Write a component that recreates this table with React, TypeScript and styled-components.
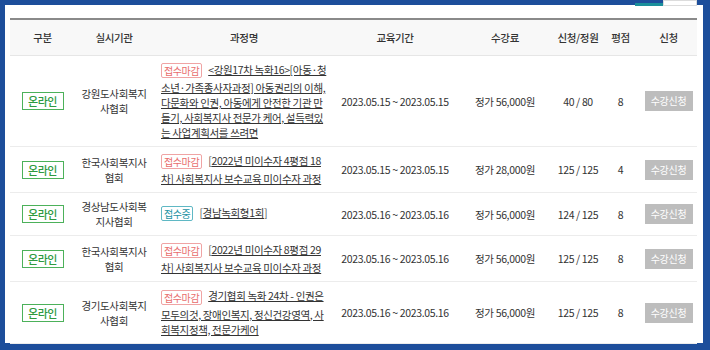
import styled, { createGlobalStyle } from 'styled-components';

const GlobalStyle = createGlobalStyle`
  html, body {
    margin: 0;
    padding: 0;
    background: #1d4e9b;
  }
  body {
    font-family: "Noto Sans CJK KR", "Noto Sans", sans-serif;
    color: #333;
  }
`;

type Course = {
  institute: string[];
  status: 'closed' | 'open';
  title: string;
  bracket?: boolean;
  period: string;
  price: string;
  count: string;
  score: string;
};

const courses: Course[] = [
  {
    institute: ['강원도사회복지', '사협회'],
    status: 'closed',
    title:
      '<강원17차 녹화16>[아동·청소년·가족종사자과정] 아동권리의 이해, 다문화와 인권, 아동에게 안전한 기관 만들기, 사회복지사 전문가 케어, 설득력있는 사업계획서를 쓰려면',
    period: '2023.05.15 ~ 2023.05.15',
    price: '정가 56,000원',
    count: '40 / 80',
    score: '8',
  },
  {
    institute: ['한국사회복지사', '협회'],
    status: 'closed',
    bracket: true,
    title: '2022년 미이수자 4평점 18차] 사회복지사 보수교육 미이수자 과정',
    period: '2023.05.15 ~ 2023.05.15',
    price: '정가 28,000원',
    count: '125 / 125',
    score: '4',
  },
  {
    institute: ['경상남도사회복', '지사협회'],
    status: 'open',
    bracket: true,
    title: '경남녹회형1회',
    period: '2023.05.16 ~ 2023.05.16',
    price: '정가 56,000원',
    count: '124 / 125',
    score: '8',
  },
  {
    institute: ['한국사회복지사', '협회'],
    status: 'closed',
    bracket: true,
    title: '2022년 미이수자 8평점 29차] 사회복지사 보수교육 미이수자 과정',
    period: '2023.05.16 ~ 2023.05.16',
    price: '정가 56,000원',
    count: '125 / 125',
    score: '8',
  },
  {
    institute: ['경기도사회복지', '사협회'],
    status: 'closed',
    title: '경기협회 녹화 24차 - 인권은 모두의것, 장애인복지, 정신건강영역, 사회복지정책, 전문가케어',
    period: '2023.05.16 ~ 2023.05.16',
    price: '정가 56,000원',
    count: '125 / 125',
    score: '8',
  },
];

const columns = [65, 78, 182, 120, 100, 46, 39, 57];
const headers = ['구분', '실시기관', '과정명', '교육기간', '수강료', '신청/정원', '평점', '신청'];

export default function App() {
  return (
    <>
      <GlobalStyle />
      <Frame>
        <Panel>
          <Tabs>
            <Tab active />
            <Tab />
          </Tabs>
          <Table>
            <colgroup>
              {columns.map((w, i) => (
                <col key={i} style={{ width: w }} />
              ))}
            </colgroup>
            <thead>
              <tr>
                {headers.map(h => (
                  <Th key={h}>{h}</Th>
                ))}
              </tr>
            </thead>
            <tbody>
              {courses.map((c, i) => (
                <tr key={i}>
                  <Td>
                    <OnlineBadge>온라인</OnlineBadge>
                  </Td>
                  <Td>
                    {c.institute.map(line => (
                      <Line key={line}>{line}</Line>
                    ))}
                  </Td>
                  <TitleTd>
                    <StatusBadge status={c.status}>
                      {c.status === 'open' ? '접수중' : '접수마감'}
                    </StatusBadge>
                    {c.bracket && <Bracket>[</Bracket>}
                    <TitleLink>{c.title}</TitleLink>
                    {c.status === 'open' && <Bracket>]</Bracket>}
                  </TitleTd>
                  <Td>{c.period}</Td>
                  <Td>{c.price}</Td>
                  <Td>{c.count}</Td>
                  <Td>{c.score}</Td>
                  <Td>
                    <ApplyButton>수강신청</ApplyButton>
                  </Td>
                </tr>
              ))}
            </tbody>
          </Table>
        </Panel>
      </Frame>
    </>
  );
}

const Frame = styled.div`
  width: 710px;
  height: 350px;
  padding: 5px 7px 7px 5px;
  box-sizing: border-box;
  background: #1d4e9b;
  overflow: hidden;
`;

const Panel = styled.div`
  position: relative;
  background: #fff;
  height: 100%;
  padding: 13px 6px 0 5px;
  box-sizing: border-box;
`;

const Tabs = styled.div`
  position: absolute;
  top: -5px;
  right: 6px;
  display: flex;
  height: 6px;
`;

const Tab = styled.div<{ active?: boolean }>`
  width: ${p => (p.active ? '28px' : '34px')};
  height: 6px;
  box-sizing: border-box;
  border: ${p => (p.active ? 'none' : '1px solid #dcdcdc')};
  border-bottom: ${p => (p.active ? '3px solid #1a8f9b' : '1px solid #dcdcdc')};
  background: ${p => (p.active ? '#1d4e9b' : '#fff')};
`;

const Table = styled.table`
  width: 687px;
  table-layout: fixed;
  border-collapse: collapse;
  border-top: 2px solid #8a8a8a;
  font-size: 10.5px;
  line-height: 15px;
  letter-spacing: -0.35px;
`;

const Th = styled.th`
  height: 35px;
  padding: 0;
  background: #f8f8f8;
  border-bottom: 1px solid #e6e6e6;
  font-weight: 500;
  color: #333;
  text-align: center;
`;

const Td = styled.td`
  padding: 6px 2px;
  text-align: center;
  vertical-align: middle;
  border-bottom: 1px solid #ececec;
  color: #333;
  white-space: nowrap;
`;

const TitleTd = styled(Td)`
  text-align: left;
  white-space: normal;
  padding: 6px 8px 6px 8px;
  word-break: break-all;
`;

const Line = styled.div``;

const OnlineBadge = styled.span`
  display: inline-block;
  width: 42px;
  height: 18px;
  line-height: 16px;
  box-sizing: border-box;
  border: 1px solid #4cb15a;
  color: #2f9a3f;
  font-weight: 500;
  font-size: 11px;
  letter-spacing: -0.4px;
`;

const StatusBadge = styled.span<{ status: 'open' | 'closed' }>`
  display: inline-block;
  height: 15px;
  line-height: 13px;
  padding: 0 2px;
  margin: 1px 6px 2px 0;
  box-sizing: border-box;
  border: 1px solid ${p => (p.status === 'open' ? '#5fb8c4' : '#f0a4a4')};
  border-radius: 2px;
  color: ${p => (p.status === 'open' ? '#1e93a4' : '#e86d6d')};
  font-size: 10px;
  letter-spacing: -0.4px;
  vertical-align: middle;
`;

const Bracket = styled.span`
  color: #555;
`;

const TitleLink = styled.a`
  color: #333;
  text-decoration: underline;
  cursor: pointer;
`;

const ApplyButton = styled.span`
  display: inline-block;
  width: 48px;
  height: 20px;
  line-height: 20px;
  background: #bdbdbd;
  color: #fff;
  font-size: 10px;
  letter-spacing: -0.3px;
`;
